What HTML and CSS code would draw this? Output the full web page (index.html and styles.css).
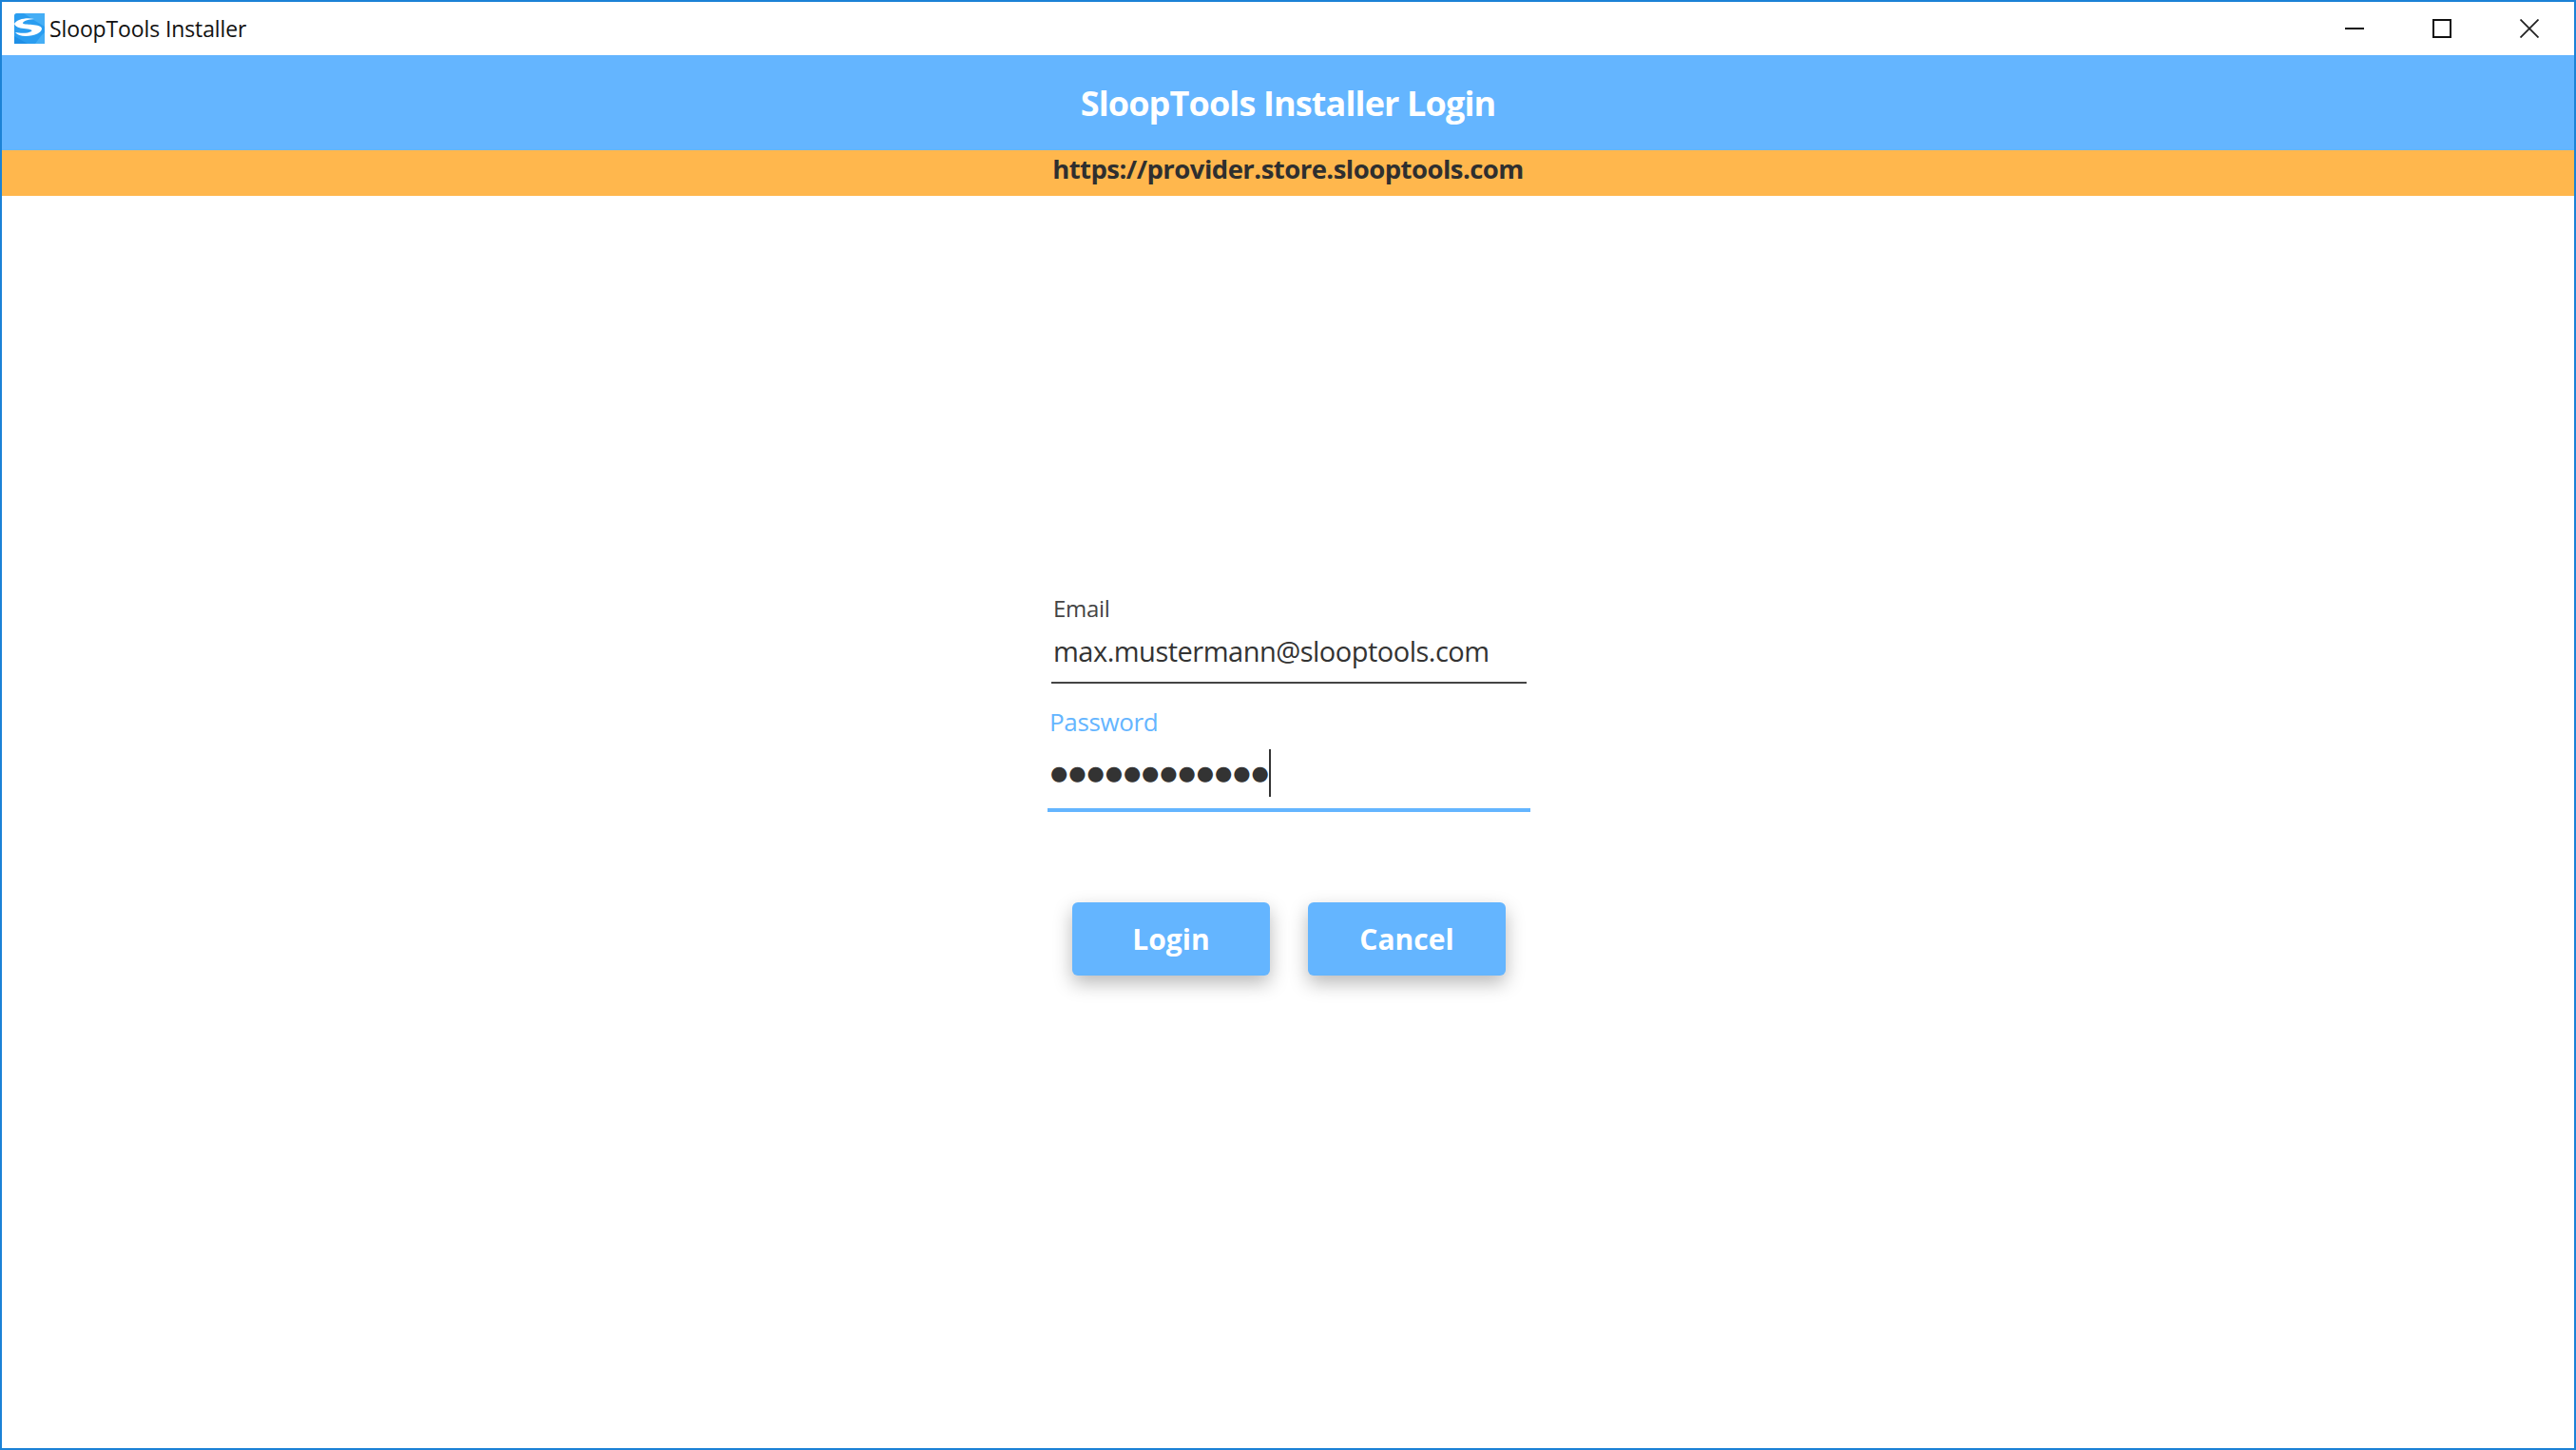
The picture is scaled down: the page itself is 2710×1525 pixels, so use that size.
FILE: index.html
```html
<!DOCTYPE html>
<html lang="en">
<head>
<meta charset="utf-8">
<title>SloopTools Installer</title>
<link rel="stylesheet" href="styles.css">
</head>
<body>
<div class="window">
  <div class="titlebar">
    <svg class="app-icon" viewBox="0 0 32 32" width="32" height="32" aria-hidden="true">
      <rect width="32" height="32" rx="2.5" fill="#2a9df0"/>
      <path d="M10 0H32V14L22 8Z" fill="#45aef5"/>
      <path d="M0 24L14 32H0Z" fill="#1f8fe6"/>
      <path d="M28 24L32 20V32H22Z" fill="#45aef5"/>
      <path d="M0 11C3 6 13 4 21 6C16 6.500 10 7.500 9 10C8.500 11.500 14 11.500 19 12C24 12.500 29 13.500 29 16C29 20 22 24 12 24C7 24 3 22.500 1 20C6 21 14 21.500 18 19C20 17.500 16 16.500 10 16C5 15.500 1 14 0 11Z" fill="#fff"/>
    </svg>
    <span class="app-name">SloopTools Installer</span>
    <div class="controls">
      <svg class="ctl" viewBox="0 0 20 20" width="20" height="20" aria-hidden="true"><path d="M0 10H20" stroke="#111" stroke-width="2" fill="none"/></svg>
      <svg class="ctl" viewBox="0 0 20 20" width="20" height="20" aria-hidden="true"><path d="M1 1H19V19H1Z" stroke="#111" stroke-width="2" fill="none"/></svg>
      <svg class="ctl" viewBox="0 0 20 20" width="20" height="20" aria-hidden="true"><path d="M0.500 0.500L19.500 19.500M19.500 0.500L0.500 19.500" stroke="#222" stroke-width="1.800" fill="none"/></svg>
    </div>
  </div>
  <header class="banner">SloopTools Installer Login</header>
  <div class="url-bar">https://provider.store.slooptools.com</div>
  <main class="content">
    <form class="login">
      <div class="field">
        <div class="label">Email</div>
        <div class="value">max.mustermann@slooptools.com</div>
      </div>
      <div class="field field-focus">
        <div class="label">Password</div>
        <div class="value"><span class="dots">●●●●●●●●●●●●</span><span class="caret"></span></div>
      </div>
      <div class="actions">
        <button type="button" class="btn">Login</button>
        <button type="button" class="btn">Cancel</button>
      </div>
    </form>
  </main>
</div>
</body>
</html>
```
FILE: styles.css
```css
* { box-sizing: border-box; }
html, body { margin: 0; padding: 0; }
body { font-family: "Open Sans", "Noto Sans", sans-serif; color: #333; background: #fff; }
.window {
  width: 2710px; height: 1525px;
  border: 2px solid #1b82d6;
  display: flex; flex-direction: column;
  overflow: hidden;
}
.titlebar {
  height: 56px; display: flex; align-items: center;
  padding-left: 13px; background: #fff; flex: none;
}
.app-icon { flex: none; }
.app-name { margin-left: 5px; font-size: 23px; letter-spacing: -0.12px; color: #111; }
.controls { margin-left: auto; display: flex; gap: 72px; padding-right: 37px; align-items: center; }
.banner {
  height: 100px; flex: none; background: #64b5ff; color: #fff;
  display: flex; align-items: center; justify-content: center;
  font-size: 36px; font-weight: 700; letter-spacing: -0.87px;
}
.url-bar {
  height: 48px; flex: none; background: #ffb74d; color: #2f2f2f;
  text-align: center; font-size: 27.5px; font-weight: 700; line-height: 40px; letter-spacing: -0.53px;
}
.content { flex: 1; display: flex; justify-content: center; padding-top: 413px; }
.login { width: 508px; margin-left: 2px; display: flex; flex-direction: column; align-items: center; }
.field { width: 500px; border-bottom: 2px solid #444; height: 100px; padding: 5px 0 0 2px; }
.label { font-size: 24px; line-height: 32px; color: #444; letter-spacing: -0.3px; }
.value { font-size: 29px; line-height: 44px; margin-top: 7px; color: #333; letter-spacing: -0.5px; }
.field-focus { width: 508px; height: 117px; border-bottom: 4px solid #64b5ff; padding-left: 2px; margin-top: 18px; }
.field-focus .label { color: #64b5ff; font-size: 26px; line-height: 34px; letter-spacing: -0.35px; }
.field-focus .value { display: flex; align-items: center; height: 52px; margin-top: 11px; padding-left: 1px; }
.dots { font-family: "DejaVu Sans", sans-serif; font-size: 21px; letter-spacing: 0.9px; color: #333; }
.caret { width: 2px; height: 50px; background: #333; margin-left: -1px; }
.actions { display: flex; gap: 40px; margin-top: 95px; }
.btn {
  width: 208px; height: 77px; border: 0; border-radius: 6px;
  background: #64b5ff; color: #fff;
  font-family: inherit; font-size: 30px; font-weight: 700;
  box-shadow: 0 8px 20px rgba(0,0,0,.28);
}
```
